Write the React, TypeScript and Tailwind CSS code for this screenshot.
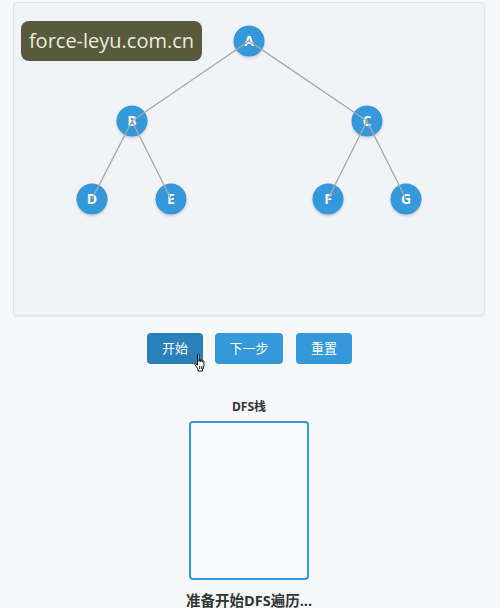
import React from 'react';

type GraphNode = { id: string; x: number; y: number };

const nodes: GraphNode[] = [
  { id: 'A', x: 236, y: 39 },
  { id: 'B', x: 119, y: 119 },
  { id: 'C', x: 354, y: 119 },
  { id: 'D', x: 79, y: 197 },
  { id: 'E', x: 158, y: 197 },
  { id: 'F', x: 315, y: 197 },
  { id: 'G', x: 393, y: 197 },
];

const edges: [string, string][] = [
  ['A', 'B'],
  ['A', 'C'],
  ['B', 'D'],
  ['B', 'E'],
  ['C', 'F'],
  ['C', 'G'],
];

const byId = (id: string) => nodes.find((n) => n.id === id)!;

function TreeGraph() {
  return (
    <svg width={472} height={314} className="block">
      <defs>
        <filter id="nodeShadow" x="-50%" y="-50%" width="200%" height="200%">
          <feDropShadow dx="0" dy="1.5" stdDeviation="1.2" floodColor="#000" floodOpacity="0.18" />
        </filter>
      </defs>
      {nodes.map((n) => (
        <g key={n.id}>
          <circle cx={n.x} cy={n.y} r={15.5} fill="#3498db" filter="url(#nodeShadow)" />
          <text
            x={n.x}
            y={n.y + 5}
            textAnchor="middle"
            fill="#fff"
            fontSize={14}
            fontWeight={700}
            fontFamily="'Open Sans', 'Liberation Sans', sans-serif"
          >
            {n.id}
          </text>
        </g>
      ))}
      {/* 边画在节点之上 */}
      {edges.map(([a, b]) => {
        const p = byId(a);
        const q = byId(b);
        return (
          <line
            key={`${a}-${b}`}
            x1={p.x}
            y1={p.y}
            x2={q.x}
            y2={q.y}
            stroke="#a9a9a9"
            strokeWidth={1.4}
          />
        );
      })}
    </svg>
  );
}

function HandCursor() {
  return (
    <svg
      width={14}
      height={20}
      viewBox="0 0 14 20"
      className="absolute left-[47px] top-[20px]"
    >
      <path
        d="M3.5 1.5c0-.8 1.6-.8 1.6 0v7l.1-1.4c0-.8 1.5-.8 1.5 0v1.6l.1-1c0-.8 1.5-.8 1.5 0v1.4l.1-.7c0-.8 1.5-.8 1.5 0v4.2c0 1.6-.7 2.8-1.4 3.6v1.8H4v-1.8L1.2 12c-.6-.9.4-1.8 1.2-1L3.5 12.3z"
        fill="#fff"
        stroke="#111"
        strokeWidth={1}
        strokeLinejoin="round"
      />
      <path d="M5.6 13v3M7.4 13v3M9.1 13v3" stroke="#111" strokeWidth={0.8} />
    </svg>
  );
}

export default function App() {
  return (
    <div
      className="min-h-[608px] w-[500px] bg-[#f6f9fc] pt-[2px]"
      style={{ fontFamily: "'Open Sans', 'Noto Sans CJK SC', sans-serif" }}
    >
      <div className="relative ml-[13px] h-[314px] w-[472px] rounded-[4px] border border-[#e1e4e8] bg-[#f1f3f6] shadow-[0_1px_2px_rgba(0,0,0,0.06)]">
        <div className="absolute -left-px -top-px">
          <TreeGraph />
        </div>
        <div className="absolute left-[7px] top-[18px] flex h-[40px] w-[181px] items-center justify-center rounded-[8px] bg-[#585a3e] text-[20px] text-[#ecebdc]">
          force-leyu.com.cn
        </div>
      </div>

      <div className="mt-[17px] flex justify-center pr-[1px]">
        <div className="relative">
          <button className="h-[31px] w-[56px] rounded-[4px] bg-[#2a80b9] text-[13px] text-white">
            开始
          </button>
          <HandCursor />
        </div>
        <button className="ml-[12px] h-[31px] w-[68px] rounded-[4px] bg-[#3498db] text-[13px] text-white">
          下一步
        </button>
        <button className="ml-[13px] h-[31px] w-[56px] rounded-[4px] bg-[#3498db] text-[13px] text-white">
          重置
        </button>
      </div>

      <div className="mt-[35px] flex flex-col items-center pr-[2px]">
        <div className="text-[12px] font-bold leading-[16px] text-[#333]">DFS栈</div>
        <div className="mt-[6px] h-[159px] w-[120px] rounded-[4px] border-2 border-[#3498db] bg-[#f8fafd]" />
        <div className="mt-[12px] text-[14.5px] font-bold leading-[18px] text-[#333]">
          准备开始DFS遍历...
        </div>
      </div>
    </div>
  );
}
